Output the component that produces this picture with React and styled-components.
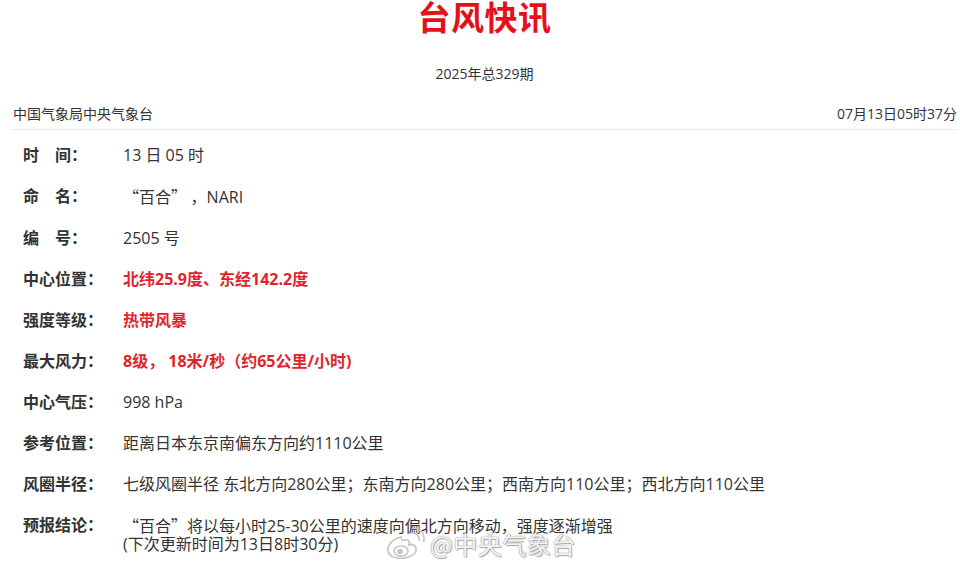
import React from "react";
import styled, { createGlobalStyle } from "styled-components";

const Global = createGlobalStyle`
  html, body { margin: 0; padding: 0; background: #fff; }
  body {
    font-family: "Open Sans", "Noto Sans CJK SC", sans-serif;
    color: #333;
    width: 960px;
    height: 570px;
    overflow: hidden;
  }
`;

const Page = styled.div`
  position: relative;
  width: 960px;
  height: 570px;
  padding: 0 3px 0 12px;
  box-sizing: border-box;
`;

const Title = styled.h1`
  margin: 0;
  text-align: center;
  font-family: "Noto Sans CJK SC", sans-serif;
  font-size: 33px;
  line-height: 32px;
  font-weight: 700;
  color: #e6101a;
  letter-spacing: 0.5px;
`;

const Issue = styled.div`
  margin-top: 32px;
  text-align: center;
  font-size: 14px;
  line-height: 20px;
  color: #333;
`;

const Header = styled.div`
  margin-top: 20px;
  display: flex;
  justify-content: space-between;
  align-items: center;
  font-size: 14px;
  line-height: 20px;
  padding: 0 0 5px 1px;
  border-bottom: 1px solid #ececec;
`;

const List = styled.div`
  margin-top: 4px;
  padding-left: 11px;
  display: flex;
  flex-direction: column;
`;

const Row = styled.div`
  display: flex;
  align-items: flex-start;
  padding: 11.5px 0;
  font-size: 16px;
  line-height: 18px;
`;

const Label = styled.div`
  width: 100px;
  flex: none;
  font-weight: 700;
  color: #333;
  white-space: pre;
`;

const Value = styled.div`
  color: ${(p) => (p.$red ? "#e0242b" : "#333")};
  font-weight: ${(p) => (p.$red ? 700 : 400)};
  white-space: pre;
`;

const Quote = styled.span`
  font-family: "Noto Sans CJK SC", sans-serif;
`;

const Watermark = styled.div`
  position: absolute;
  left: 384px;
  top: 527px;
  display: flex;
  align-items: center;
  gap: 4px;
  pointer-events: none;
`;

const WatermarkText = styled.span`
  font-family: "Noto Sans CJK SC", sans-serif;
  font-size: 24px;
  line-height: 34px;
  color: rgba(255, 255, 255, 0.9);
  text-shadow: 0 0 1px #9a9a9a, 0 0 2px #b0b0b0, 1px 1px 1px #aaa;
  letter-spacing: 0.5px;
`;

const WeiboLogo = () => (
  <svg width="42" height="34" viewBox="0 0 42 34">
    <g fill="none" stroke="#c4c4c4" strokeWidth="1.6">
      <path d="M17 10 C8 12 3 19 4 24 C5 30 13 32 20 31 C28 30 33 26 32 21 C31 17 27 17 25 18 C26 14 24 12 21 13 C19 14 18 14 17 10 Z" fill="rgba(255,255,255,0.85)" />
      <ellipse cx="17" cy="24" rx="7" ry="5" />
      <circle cx="16" cy="24.5" r="2" fill="#c4c4c4" />
      <path d="M27 6 C32 5 36 9 35 14" />
      <path d="M28 1.5 C36 0.5 42 7 39.5 15" />
    </g>
  </svg>
);

const rows = [
  { label: "时　间：", value: "13 日 05 时" },
  {
    label: "命　名：",
    value: (
      <>
        <Quote>“百合” ，</Quote>NARI
      </>
    ),
  },
  { label: "编　号：", value: "2505 号" },
  { label: "中心位置：", value: "北纬25.9度、东经142.2度", red: true },
  { label: "强度等级：", value: "热带风暴", red: true },
  { label: "最大风力：", value: "8级， 18米/秒（约65公里/小时)", red: true },
  { label: "中心气压：", value: "998 hPa" },
  { label: "参考位置：", value: "距离日本东京南偏东方向约1110公里" },
  {
    label: "风圈半径：",
    value: "七级风圈半径 东北方向280公里；东南方向280公里；西南方向110公里；西北方向110公里",
  },
  {
    label: "预报结论：",
    value: (
      <>
        <Quote>“百合”</Quote>将以每小时25-30公里的速度向偏北方向移动，强度逐渐增强
        {"\n"}(下次更新时间为13日8时30分)
      </>
    ),
  },
];

export default function App() {
  return (
    <>
      <Global />
      <Page>
        <Title>台风快讯</Title>
        <Issue>2025年总329期</Issue>
        <Header>
          <span>中国气象局中央气象台</span>
          <span>07月13日05时37分</span>
        </Header>
        <List>
          {rows.map((r) => (
            <Row key={r.label}>
              <Label>{r.label}</Label>
              <Value $red={r.red}>{r.value}</Value>
            </Row>
          ))}
        </List>
        <Watermark>
          <WeiboLogo />
          <WatermarkText>@中央气象台</WatermarkText>
        </Watermark>
      </Page>
    </>
  );
}
